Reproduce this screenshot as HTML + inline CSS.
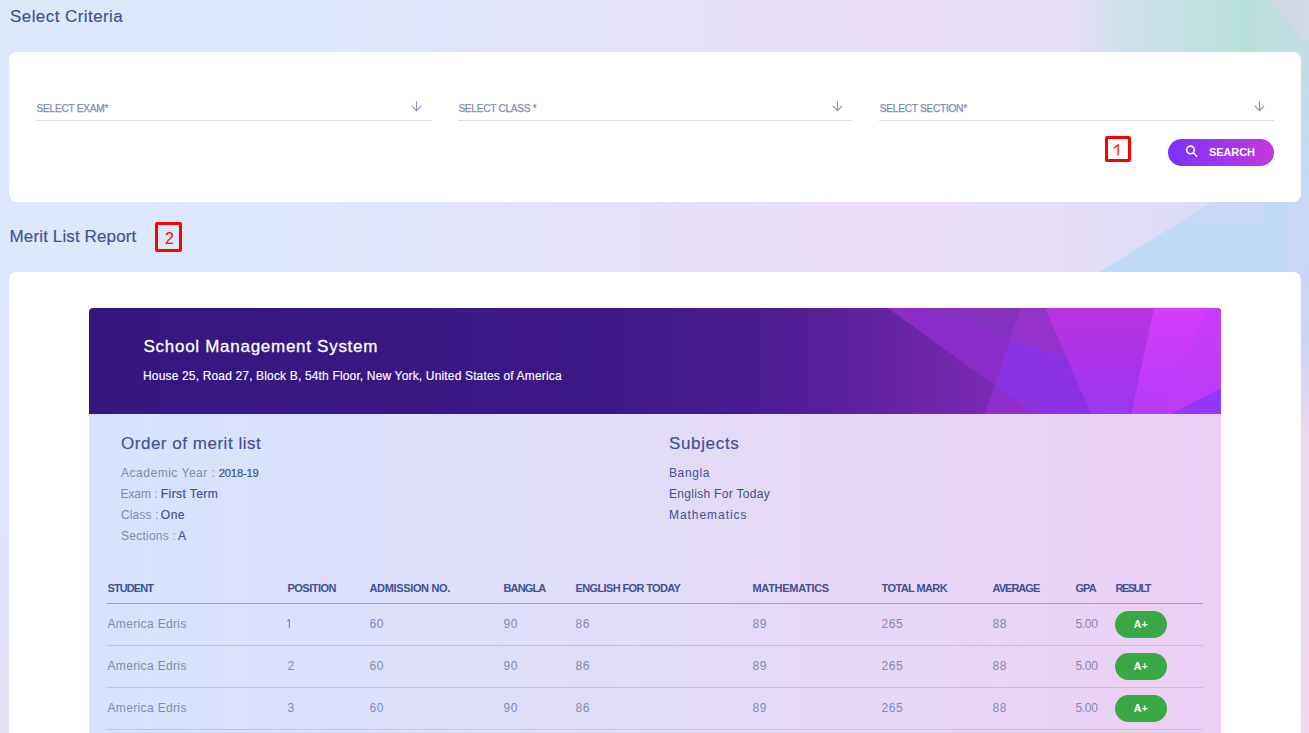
<!DOCTYPE html>
<html><head><meta charset="utf-8"><title>Merit List</title>
<style>
*{margin:0;padding:0;box-sizing:border-box}
html,body{width:1309px;height:733px;overflow:hidden}
body{font-family:"Liberation Sans",sans-serif;position:relative;background:#e3e4f8}
.bg{position:absolute;left:0;top:0}
.abs{position:absolute;white-space:nowrap;line-height:1}
.card{position:absolute;background:#fff;border-radius:8px}
.t1{color:#415094;-webkit-text-stroke:0.15px #415094}
.lbl{color:#828bb2;text-transform:uppercase;-webkit-text-stroke:0.25px #828bb2}
.line{position:absolute;height:1px;background:#dcdfea}
.redbox{position:absolute;border:3px solid #ff0000;border-radius:2px}
.red{color:#ff0000}
.btn{position:absolute;border-radius:14px;background:linear-gradient(90deg,#7b31fe 0%,#c33ad9 100%)}
.w{color:#fff}
.info{color:#828bb2;letter-spacing:0.25px}
.val{color:#415094;-webkit-text-stroke:0.2px #415094}
.subj{color:#415094;letter-spacing:0.3px}
.th{color:#415094;font-weight:bold;text-transform:uppercase;letter-spacing:-0.4px}
.td{color:#828bb2}
.row{position:absolute;left:107px;width:1096px;height:1px;background:#bfc2dc}
.badge{position:absolute;width:52px;height:27px;border-radius:14px;background:#3aa845}
</style></head>
<body>
<svg class="bg" width="1309" height="733" viewBox="0 0 1309 733">
<defs>
<linearGradient id="gbase" x1="0" x2="1" y1="0" y2="0">
<stop offset="0" stop-color="#dde8fb"/><stop offset="0.24" stop-color="#dee7fb"/>
<stop offset="0.48" stop-color="#e5e1f8"/><stop offset="0.65" stop-color="#e9dcf6"/>
<stop offset="0.82" stop-color="#e8def6"/><stop offset="1" stop-color="#e6dcf4"/></linearGradient>
<linearGradient id="gtop" x1="0" x2="1" y1="0" y2="0">
<stop offset="0" stop-color="#dde8fb"/><stop offset="0.27" stop-color="#dee7fb"/>
<stop offset="0.5" stop-color="#e4e2f8"/><stop offset="0.68" stop-color="#e9dcf6"/><stop offset="0.815" stop-color="#e6dff6"/>
<stop offset="0.86" stop-color="#d0e0ea"/><stop offset="0.92" stop-color="#c3e0e2"/>
<stop offset="0.95" stop-color="#b9e0d9"/><stop offset="1" stop-color="#c6dce6"/></linearGradient>
<linearGradient id="gright" x1="0" x2="0" y1="0" y2="1">
<stop offset="0" stop-color="#c3dde4"/><stop offset="0.22" stop-color="#c8d9f4"/>
<stop offset="0.44" stop-color="#ccd6f4"/><stop offset="0.56" stop-color="#ecd6f0"/>
<stop offset="1" stop-color="#f0d8f0"/></linearGradient>
<linearGradient id="gleft" x1="0" x2="0" y1="0" y2="1">
<stop offset="0" stop-color="#dee8fb"/><stop offset="0.6" stop-color="#dfe5fb"/>
<stop offset="1" stop-color="#e3e0f3"/></linearGradient>
</defs>
<rect x="0" y="0" width="1309" height="733" fill="url(#gbase)"/>
<rect x="0" y="0" width="1309" height="56" fill="url(#gtop)"/>
<linearGradient id="gtri" x1="0" x2="0" y1="0" y2="1"><stop offset="0" stop-color="#cdd7f5"/><stop offset="0.45" stop-color="#c3daf5"/><stop offset="1" stop-color="#bddcf6"/></linearGradient>
<linearGradient id="gband" x1="0" x2="1" y1="0" y2="0"><stop offset="0" stop-color="#e9dcf6" stop-opacity="0"/><stop offset="1" stop-color="#d8dcf6"/></linearGradient>
<rect x="950" y="195" width="270" height="80" fill="url(#gband)"/>
<polygon points="1099.5,272 1212.4,202 1220,195 1309,195 1309,272" fill="url(#gtri)"/>
<polygon points="1262,195 1309,195 1309,272 1272,272" fill="#c2d9f6"/>
<polygon points="1286,195 1309,195 1309,272 1286,272" fill="#cad8f5"/>
<polygon points="1268,0 1309,0 1309,45" fill="#d6d8e8" opacity="0.7"/>
<rect x="1297" y="40" width="12" height="693" fill="url(#gright)"/>
<rect x="0" y="40" width="12" height="693" fill="url(#gleft)"/>
</svg>
<div class="abs t1" style="left:10px;top:7.61px;font-size:17px;letter-spacing:0.43px">Select Criteria</div>
<div class="card" style="left:9px;top:52px;width:1292px;height:150px"></div>
<div class="abs lbl" style="left:36.5px;top:104.07px;font-size:10.2px;letter-spacing:-0.28px">Select Exam*</div>
<div class="line" style="left:36px;top:120px;width:395px"></div>
<svg class="bg" style="left:410.5px;top:100px" width="11" height="12" viewBox="0 0 11 12"><path d="M5.5 1.2 V10.6 M0.8 5.9 L5.5 10.6 L10.2 5.9" fill="none" stroke="#8a92b8" stroke-width="1.1"/></svg>
<div class="abs lbl" style="left:458.4px;top:104.07px;font-size:10.2px;letter-spacing:-0.32px">Select Class *</div>
<div class="line" style="left:458px;top:120px;width:394px"></div>
<svg class="bg" style="left:832.2px;top:100px" width="11" height="12" viewBox="0 0 11 12"><path d="M5.5 1.2 V10.6 M0.8 5.9 L5.5 10.6 L10.2 5.9" fill="none" stroke="#8a92b8" stroke-width="1.1"/></svg>
<div class="abs lbl" style="left:879.8px;top:104.07px;font-size:10.2px;letter-spacing:-0.3px">Select Section*</div>
<div class="line" style="left:879px;top:120px;width:395px"></div>
<svg class="bg" style="left:1253.7px;top:100px" width="11" height="12" viewBox="0 0 11 12"><path d="M5.5 1.2 V10.6 M0.8 5.9 L5.5 10.6 L10.2 5.9" fill="none" stroke="#8a92b8" stroke-width="1.1"/></svg>
<div class="redbox" style="left:1105.2px;top:136.3px;width:26px;height:25.7px"></div>
<svg class="bg" width="1309" height="200" viewBox="0 0 1309 200"><path d="M1113.9 148.3 L1118.1 145.1 V155.6" fill="none" stroke="#ff0000" stroke-width="1.25"/></svg>
<div class="btn" style="left:1168px;top:139px;width:106px;height:27px"></div>
<svg class="bg" style="left:1184px;top:144px" width="16" height="15" viewBox="0 0 16 15"><circle cx="6.5" cy="5.9" r="3.8" fill="none" stroke="#fff" stroke-width="1.6"/><path d="M9.3 8.8 L12.8 12.2" stroke="#fff" stroke-width="1.5" stroke-linecap="round"/></svg>
<div class="abs w" style="left:1209px;top:147.49px;font-size:11px;font-weight:bold;letter-spacing:-0.1px">SEARCH</div>
<div class="abs t1" style="left:9.6px;top:227.61px;font-size:17px;letter-spacing:0.12px">Merit List Report</div>
<div class="redbox" style="left:155.3px;top:222.2px;width:27px;height:30.3px"></div>
<div class="abs red" style="left:164.9px;top:231.16px;font-size:16px;">2</div>
<div class="card" style="left:9px;top:272px;width:1292px;height:520px"></div>
<svg class="bg" style="left:89px;top:308px" width="1132" height="106" viewBox="89 308 1132 106">
<defs>
<linearGradient id="ghdr" gradientUnits="userSpaceOnUse" x1="89" x2="1221" y1="0" y2="0">
<stop offset="0" stop-color="#35167f"/><stop offset="0.45" stop-color="#3b1886"/>
<stop offset="0.59" stop-color="#4a1c92"/><stop offset="0.70" stop-color="#6224a0"/>
<stop offset="0.80" stop-color="#7a2ab4"/><stop offset="1" stop-color="#8a2ec0"/></linearGradient>
<linearGradient id="gD" x1="0" x2="0" y1="0" y2="1">
<stop offset="0" stop-color="#bb33e0"/><stop offset="1" stop-color="#9a36ef"/></linearGradient>
<linearGradient id="gE" x1="0" x2="0" y1="0" y2="1">
<stop offset="0" stop-color="#d53cf8"/><stop offset="1" stop-color="#b63cf8"/></linearGradient>
<clipPath id="hclip"><path d="M89,312 Q89,308 93,308 L1217,308 Q1221,308 1221,312 L1221,414 L89,414 Z"/></clipPath>
</defs>
<g clip-path="url(#hclip)">
<rect x="89" y="308" width="1132" height="106" fill="url(#ghdr)"/>
<polygon points="888,308 1221,308 1221,414 1034,414" fill="#8a2cc8"/>
<polygon points="929,308 1045,308 1066,357" fill="#8230be"/>
<polygon points="1021,308 1045,308 1091,414 985,414" fill="#8a32e0"/>
<polygon points="1021,308 1045,308 1066,357 1010,339.6" fill="#9532cc"/>
<polygon points="994.5,385.3 985,414 1034,414" fill="#8e2dcc"/>
<polygon points="1045,308 1154,308 1131,414 1091,414" fill="url(#gD)"/>
<polygon points="1154,308 1221,308 1221,414 1131,414" fill="url(#gE)"/>
<polygon points="1208,308 1221,308 1221,414 1160,414" fill="#c03cf6" opacity="0.6"/>
<polygon points="1221,388 1221,414 1171,414" fill="#9238fa"/>
</g>
</svg>
<div class="abs w" style="left:143.5px;top:337.81px;font-size:17px;letter-spacing:0.72px;-webkit-text-stroke:0.3px #fff">School Management System</div>
<div class="abs w" style="left:143px;top:370.14px;font-size:12px;letter-spacing:0.16px;-webkit-text-stroke:0.15px #fff">House 25, Road 27, Block B, 54th Floor, New York, United States of America</div>
<div class="abs" style="left:89px;top:414px;width:1132px;height:330px;background:linear-gradient(90deg,#d6e3fd 0%,#dde0fa 25%,#e2dcf8 50%,#e8d6f6 75%,#ebd0f4 100%)"></div>
<div class="abs t1" style="left:121px;top:434.81px;font-size:17px;letter-spacing:0.52px">Order of merit list</div>
<div class="abs info" style="left:121px;top:466.84px;font-size:12px;letter-spacing:0.52px">Academic Year :</div>
<div class="abs val" style="left:218.7px;top:467.52px;font-size:11.2px;letter-spacing:-0.15px">2018-19</div>
<div class="abs info" style="left:120.5px;top:487.84px;font-size:12px;letter-spacing:-0.1px">Exam :</div>
<div class="abs val" style="left:160.8px;top:487.84px;font-size:12px;letter-spacing:0.42px">First Term</div>
<div class="abs info" style="left:121px;top:508.84px;font-size:12px;letter-spacing:0.1px">Class :</div>
<div class="abs val" style="left:160.8px;top:508.84px;font-size:12px;letter-spacing:0.5px">One</div>
<div class="abs info" style="left:121px;top:529.84px;font-size:12px;letter-spacing:0.25px">Sections :</div>
<div class="abs val" style="left:178px;top:529.84px;font-size:12px;letter-spacing:0.5px">A</div>
<div class="abs t1" style="left:669px;top:435.21px;font-size:17px;letter-spacing:0.65px">Subjects</div>
<div class="abs subj" style="left:669px;top:466.84px;font-size:12px;letter-spacing:0.6px">Bangla</div>
<div class="abs subj" style="left:669px;top:487.84px;font-size:12px;letter-spacing:0.3px">English For Today</div>
<div class="abs subj" style="left:669px;top:508.84px;font-size:12px;letter-spacing:0.95px">Mathematics</div>
<div class="abs th" style="left:107.5px;top:582.99px;font-size:11px;letter-spacing:-0.9px">Student</div>
<div class="abs th" style="left:287.5px;top:582.99px;font-size:11px;letter-spacing:-0.52px">Position</div>
<div class="abs th" style="left:369.5px;top:582.99px;font-size:11px;letter-spacing:-0.35px">Admission No.</div>
<div class="abs th" style="left:503.5px;top:582.99px;font-size:11px;letter-spacing:-0.86px">Bangla</div>
<div class="abs th" style="left:575.5px;top:582.99px;font-size:11px;letter-spacing:-0.63px">English For Today</div>
<div class="abs th" style="left:752.5px;top:582.99px;font-size:11px;letter-spacing:-0.3px">Mathematics</div>
<div class="abs th" style="left:881.5px;top:582.99px;font-size:11px;letter-spacing:-0.6px">Total Mark</div>
<div class="abs th" style="left:992.5px;top:582.99px;font-size:11px;letter-spacing:-0.97px">Average</div>
<div class="abs th" style="left:1075.5px;top:582.99px;font-size:11px;letter-spacing:-0.95px">GPA</div>
<div class="abs th" style="left:1115.5px;top:582.99px;font-size:11px;letter-spacing:-1.42px">Result</div>
<div class="row" style="top:603px;background:#9da2c6"></div>
<div class="abs td" style="left:107.5px;top:618.04px;font-size:12px;letter-spacing:0.35px">America Edris</div>
<svg class="bg" style="left:280px;top:612px" width="20" height="20" viewBox="280 612 20 20"><path d="M287.2 620.9 L289.3 619.8 V628.1" fill="none" stroke="#828bb2" stroke-width="1.2"/></svg>
<div class="abs td" style="left:369.5px;top:618.04px;font-size:12px;letter-spacing:0.6px">60</div>
<div class="abs td" style="left:503.5px;top:618.04px;font-size:12px;letter-spacing:0.6px">90</div>
<div class="abs td" style="left:575.5px;top:618.04px;font-size:12px;letter-spacing:0.6px">86</div>
<div class="abs td" style="left:752.5px;top:618.04px;font-size:12px;letter-spacing:0.6px">89</div>
<div class="abs td" style="left:881.5px;top:618.04px;font-size:12px;letter-spacing:0.6px">265</div>
<div class="abs td" style="left:992.5px;top:618.04px;font-size:12px;letter-spacing:0.6px">88</div>
<div class="abs td" style="left:1075.5px;top:618.04px;font-size:12px;letter-spacing:-0.35px">5.00</div>
<div class="badge" style="left:1115px;top:611px"></div>
<div class="abs w" style="left:1133.8px;top:619.01px;font-size:10.5px;font-weight:bold">A+</div>
<div class="row" style="top:645px"></div>
<div class="abs td" style="left:107.5px;top:660.04px;font-size:12px;letter-spacing:0.35px">America Edris</div>
<div class="abs td" style="left:287.5px;top:660.04px;font-size:12px;letter-spacing:0.6px">2</div>
<div class="abs td" style="left:369.5px;top:660.04px;font-size:12px;letter-spacing:0.6px">60</div>
<div class="abs td" style="left:503.5px;top:660.04px;font-size:12px;letter-spacing:0.6px">90</div>
<div class="abs td" style="left:575.5px;top:660.04px;font-size:12px;letter-spacing:0.6px">86</div>
<div class="abs td" style="left:752.5px;top:660.04px;font-size:12px;letter-spacing:0.6px">89</div>
<div class="abs td" style="left:881.5px;top:660.04px;font-size:12px;letter-spacing:0.6px">265</div>
<div class="abs td" style="left:992.5px;top:660.04px;font-size:12px;letter-spacing:0.6px">88</div>
<div class="abs td" style="left:1075.5px;top:660.04px;font-size:12px;letter-spacing:-0.35px">5.00</div>
<div class="badge" style="left:1115px;top:653px"></div>
<div class="abs w" style="left:1133.8px;top:661.01px;font-size:10.5px;font-weight:bold">A+</div>
<div class="row" style="top:687px"></div>
<div class="abs td" style="left:107.5px;top:702.04px;font-size:12px;letter-spacing:0.35px">America Edris</div>
<div class="abs td" style="left:287.5px;top:702.04px;font-size:12px;letter-spacing:0.6px">3</div>
<div class="abs td" style="left:369.5px;top:702.04px;font-size:12px;letter-spacing:0.6px">60</div>
<div class="abs td" style="left:503.5px;top:702.04px;font-size:12px;letter-spacing:0.6px">90</div>
<div class="abs td" style="left:575.5px;top:702.04px;font-size:12px;letter-spacing:0.6px">86</div>
<div class="abs td" style="left:752.5px;top:702.04px;font-size:12px;letter-spacing:0.6px">89</div>
<div class="abs td" style="left:881.5px;top:702.04px;font-size:12px;letter-spacing:0.6px">265</div>
<div class="abs td" style="left:992.5px;top:702.04px;font-size:12px;letter-spacing:0.6px">88</div>
<div class="abs td" style="left:1075.5px;top:702.04px;font-size:12px;letter-spacing:-0.35px">5.00</div>
<div class="badge" style="left:1115px;top:695px"></div>
<div class="abs w" style="left:1133.8px;top:703.01px;font-size:10.5px;font-weight:bold">A+</div>
<div class="row" style="top:729px"></div>
</body></html>
